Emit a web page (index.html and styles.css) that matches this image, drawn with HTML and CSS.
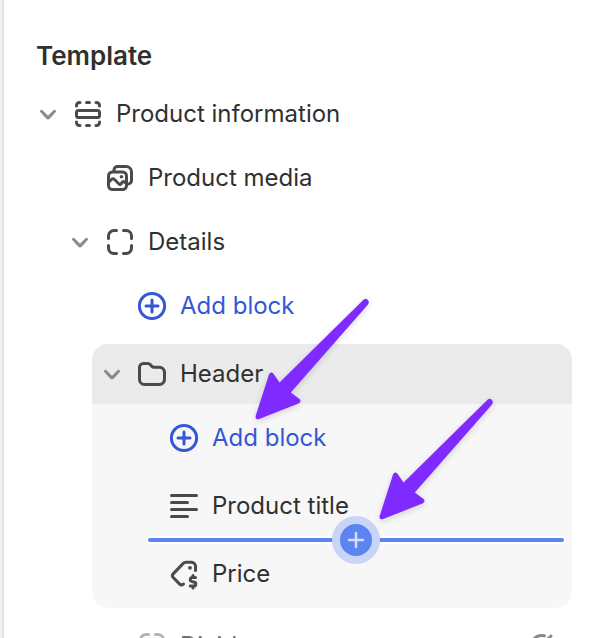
FILE: index.html
```html
<!DOCTYPE html>
<html lang="en">
<head>
    <meta charset="UTF-8">
    <meta name="viewport" content="width=device-width, initial-scale=1.0">
    <title>Template</title>
    <link rel="stylesheet" href="styles.css">
</head>
<body>
    <svg class="defs" width="0" height="0" aria-hidden="true">
        <symbol id="chevron" viewBox="0 0 32 32"><path d="M9.5 13.3l6 6.3q.5.5 1 0l6-6.3"/></symbol>
        <symbol id="section" viewBox="0 0 32 32">
            <path d="M4.5 8v-.5a3 3 0 0 1 3-3H8M14.500 4.500h3M24 4.500h.5a3 3 0 0 1 3 3V8M4.500 24v.5a3 3 0 0 0 3 3H8M14.500 27.500h3M24 27.500h.5a3 3 0 0 0 3-3V24"/>
            <rect x="4.500" y="12.500" width="23" height="7" rx="2"/>
        </symbol>
        <symbol id="media" viewBox="0 0 32 32">
            <rect x="4.500" y="10" width="18" height="17.500" rx="4"/>
            <path d="M10 8.500V8a3.500 3.500 0 0 1 3.500-3.500H22a5.500 5.500 0 0 1 5.500 5.500v8.500a3.500 3.500 0 0 1-3.500 3.500M5 20l2.500-2.500q1.500-1.500 3 0l4.500 4.500q1 1 2 0l1.500-2q1-1 2 0L22 21"/>
            <circle class="dot" cx="17.500" cy="14.700" r="1.800"/>
        </symbol>
        <symbol id="block" viewBox="0 0 32 32"><path d="M12.500 4.500H10A5.500 5.500 0 0 0 4.500 10v2.500M19.500 4.500H22a5.500 5.500 0 0 1 5.500 5.500v2.500M27.500 19.500V22a5.500 5.500 0 0 1-5.500 5.500h-2.500M12.500 27.500H10A5.500 5.500 0 0 1 4.500 22v-2.500"/></symbol>
        <symbol id="plus-circle" viewBox="0 0 32 32"><circle cx="16" cy="16" r="12.600"/><path d="M16 10v12M10 16h12"/></symbol>
        <symbol id="folder" viewBox="0 0 32 32"><path d="M3.500 9.500a4 4 0 0 1 4-4h4q2 0 3.200 1.500l.8 1q1 1.300 2.700 1.300h5.300a5 5 0 0 1 5 5v7.200a5 5 0 0 1-5 5h-15a5 5 0 0 1-5-5z"/></symbol>
        <symbol id="text" viewBox="0 0 32 32"><path d="M3.500 5.500h25M3.500 12.500h16M3.500 19.500h25M3.500 26.500h16"/></symbol>
        <symbol id="price" viewBox="0 0 32 32">
            <path d="M15.500 26l-1 .6q-1.500.8-2.800-.5l-6.500-6.600q-1.700-1.800 0-3.600L15 5.600q1.300-1.300 3-1.300h5.500a4 4 0 0 1 4 4v4.200"/>
            <circle class="dot" cx="22" cy="9.800" r="1.900"/>
            <path d="M27.500 19.500h-3.200a2 2 0 0 0-.6 3.900l2.700.8a2 2 0 0 1-.6 3.900h-3.500M25 17.500v2M25 28.500v1.500"/>
        </symbol>
        <symbol id="hidden" viewBox="0 0 32 32"><path d="M25 6L9.500 20M18.500 5.700C12 4.500 8 8 6 12q1.200 2.300 3 4M24.500 10q1 1 1.700 2c-2 4-5.500 6.500-10 6.500"/></symbol>
        <symbol id="arrow" viewBox="0 0 128 132">
            <path d="M123.200 7.200Q126 9.500 124 12.500L46.800 100.500L55.500 107Q58 109.700 54.500 111.500L14.500 127.200Q10.700 127.800 11.700 123.700L25 82.500Q26.700 79 29.500 81.700L35.500 90.500L119.500 7.800Q121.300 6 123.200 7.200z"/>
        </symbol>
    </svg>

    <main class="panel">
        <h1>Template</h1>
        <ul class="tree">
            <li>
                <div class="row">
                    <button class="toggle" aria-label="Collapse Product information"><svg class="icon"><use href="#chevron"/></svg></button>
                    <svg class="icon"><use href="#section"/></svg>
                    <span class="name">Product information</span>
                </div>
                <ul class="level">
                    <li class="row leaf">
                        <svg class="icon"><use href="#media"/></svg>
                        <span class="name">Product media</span>
                    </li>
                    <li>
                        <div class="row">
                            <button class="toggle" aria-label="Collapse Details"><svg class="icon"><use href="#chevron"/></svg></button>
                            <svg class="icon"><use href="#block"/></svg>
                            <span class="name">Details</span>
                        </div>
                        <ul class="level">
                            <li class="row leaf">
                                <button class="add"><svg class="icon"><use href="#plus-circle"/></svg>Add block</button>
                            </li>
                            <li class="group">
                                <div class="row group-head">
                                    <button class="toggle" aria-label="Collapse Header"><svg class="icon"><use href="#chevron"/></svg></button>
                                    <svg class="icon"><use href="#folder"/></svg>
                                    <span class="name">Header</span>
                                </div>
                                <ul class="level">
                                    <li class="row leaf">
                                        <button class="add"><svg class="icon"><use href="#plus-circle"/></svg>Add block</button>
                                        <svg class="arrow arrow-add"><use href="#arrow"/></svg>
                                    </li>
                                    <li class="row leaf">
                                        <svg class="icon"><use href="#text"/></svg>
                                        <span class="name">Product title</span>
                                        <svg class="arrow arrow-insert"><use href="#arrow"/></svg>
                                    </li>
                                    <li class="row leaf">
                                        <div class="insert">
                                            <button class="insert-button" aria-label="Insert block here"><svg viewBox="0 0 32 32"><path d="M16 9v14M9 16h14"/></svg></button>
                                        </div>
                                        <svg class="icon"><use href="#price"/></svg>
                                        <span class="name">Price</span>
                                    </li>
                                </ul>
                            </li>
                            <li class="row leaf muted">
                                <svg class="icon"><use href="#block"/></svg>
                                <span class="name">Divider</span>
                                <button class="toggle eye" aria-label="Show Divider"><svg class="icon"><use href="#hidden"/></svg></button>
                            </li>
                        </ul>
                    </li>
                </ul>
            </li>
        </ul>
    </main>
</body>
</html>
```
FILE: styles.css
```css
* {
    box-sizing: border-box;
}
body {
    margin: 0;
    padding-left: 2px;
    height: 100vh;
    overflow: hidden;
    background-color: #f1f1f1;
    color: #303030;
    font-family: Inter, "Liberation Sans", sans-serif;
    font-size: 24px;
    line-height: 32px;
}
.defs {
    display: block;
}
.panel {
    min-height: 100vh;
    padding: 40px 22px 0 28px;
    border-left: 2px solid #e3e3e3;
    background-color: white;
}
h1 {
    margin: 0 0 10px;
    padding-left: 4px;
    font-size: 26px;
    font-weight: 600;
    line-height: 32px;
}
ul {
    list-style: none;
    margin: 0;
    padding: 0;
}
.level {
    padding-left: 32px;
}
button {
    padding: 0;
    border: none;
    background: none;
    color: inherit;
    font: inherit;
    cursor: pointer;
}
.row {
    display: flex;
    align-items: center;
    position: relative;
    height: 64px;
}
.leaf {
    padding-left: 40px;
}
.name {
    margin-left: 12px;
}
.icon {
    display: block;
    flex: none;
    width: 32px;
    height: 32px;
    fill: none;
    stroke: #4a4a4a;
    stroke-width: 3;
    stroke-linecap: round;
    stroke-linejoin: round;
}
.dot {
    fill: #4a4a4a;
    stroke: none;
}
.toggle {
    margin-right: 8px;
}
.toggle .icon {
    stroke: #8a8a8a;
}
.add {
    display: flex;
    align-items: center;
    gap: 12px;
    color: #3457d5;
}
.add .icon {
    stroke: #3457d5;
}

/* selected group */
.group {
    margin: 6px 0 6px -4px;
    border-radius: 16px;
    background-color: #f7f7f7;
}
.group-head {
    height: 60px;
    padding-left: 4px;
    border-radius: 16px 16px 0 0;
    background-color: #ebebeb;
}
.group .level {
    padding-left: 36px;
}
.group .leaf {
    height: 68px;
}
.insert {
    position: absolute;
    top: -2px;
    left: 20px;
    right: 8px;
    display: flex;
    justify-content: center;
    align-items: center;
    height: 4px;
    border-radius: 2px;
    background-color: #5c84f0;
    box-shadow: 0 0 0 2px white;
}
.insert-button {
    flex: none;
    width: 32px;
    height: 32px;
    border-radius: 50%;
    background-color: #5c84f0;
    box-shadow: 0 0 0 8px #c9d5f7;
}
.insert-button svg {
    display: block;
    fill: none;
    stroke: #d3defb;
    stroke-width: 2.5;
    stroke-linecap: round;
}

.muted {
    color: #6f6f6f;
}
.muted .icon {
    stroke: #b5b5b5;
}
.muted .eye {
    margin: 0 14px 0 auto;
}
.muted .eye .icon {
    stroke: #8a8a8a;
}

/* pointers */
.arrow {
    position: absolute;
    z-index: 1;
    width: 128px;
    height: 132px;
    fill: #7f2aff;
    filter: drop-shadow(0 2px 3px rgba(0,0,0,0.15));
    pointer-events: none;
}
.arrow-add {
    top: -112px;
    left: 116px;
}
.arrow-insert {
    top: -80px;
    left: 240px;
}
```
